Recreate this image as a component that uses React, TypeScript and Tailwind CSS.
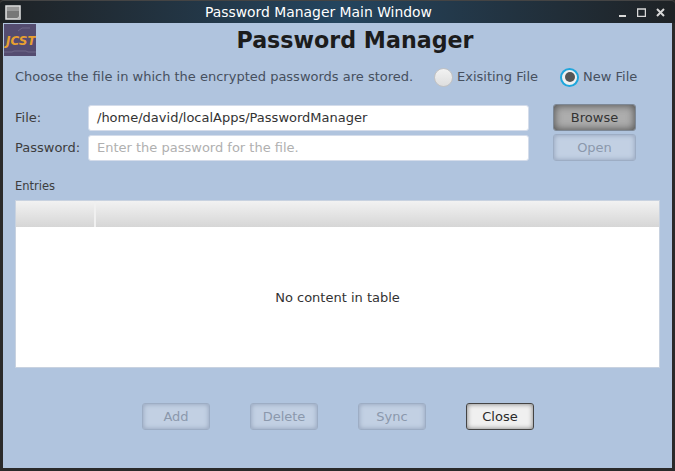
const baseButton = 'h-[27px] flex items-center justify-center rounded-[3px] text-[13px]';
const disabledButton = `${baseButton} border border-[#9dadc4] bg-[#c2d0e3] text-[#8b98ac] shadow-[inset_0_0_5px_#8f9fb8]`;

function FormRow({ label, children }: { label: string; children: React.ReactNode }) {
  return (
    <div className="flex items-center h-[27px]">
      <span className="w-[73px] text-[13px] text-[#3d3d3d]">{label}</span>
      {children}
    </div>
  );
}

function Radio({ label, checked, className }: { label: string; checked?: boolean; className: string }) {
  return (
    <div className={`flex items-center gap-[4px] ${className}`}>
      {checked ? (
        <span className="w-[19px] h-[19px] rounded-full border-2 border-[#1fa6dc] bg-[#f0f0f0] flex items-center justify-center">
          <span className="w-[10px] h-[10px] rounded-full bg-[#555]" />
        </span>
      ) : (
        <span className="w-[19px] h-[19px] rounded-full border border-[#c2c2c2] bg-gradient-to-b from-[#f2f2f2] to-[#dedede]" />
      )}
      <span className="text-[13px] text-[#46505e]">{label}</span>
    </div>
  );
}

export default function App() {
  return (
    <div className="w-[675px] h-[471px] flex flex-col bg-[#2a2a2a] overflow-hidden font-['DejaVu_Sans',sans-serif]">
      <div className="h-[23px] shrink-0 flex items-center pl-[5px] pr-[10px] rounded-t-[4px] bg-gradient-to-r from-[#1e2225] via-[#24455f] to-[#1e2225] border-t border-[#444]">
        <svg width="16" height="15" viewBox="0 0 16 15" className="shrink-0">
          <rect x="1" y="1" width="14" height="13" fill="#777" stroke="#e4e4e4" strokeWidth="1.5" />
          <rect x="2" y="2" width="12" height="4" fill="#999" />
          <circle cx="14" cy="13" r="1.5" fill="#bbb" />
        </svg>
        <span className="flex-1 text-center text-[13.9px] text-white pr-[2px]">Password Manager Main Window</span>
        <div className="flex items-center gap-[10px] shrink-0">
          <svg width="9" height="9" viewBox="0 0 9 9">
            <path d="M1 8h7" stroke="#d8d8d8" strokeWidth="2" />
          </svg>
          <svg width="9" height="9" viewBox="0 0 9 9" fill="none">
            <rect x="0.5" y="1" width="8" height="7.5" stroke="#d8d8d8" strokeWidth="1.5" />
          </svg>
          <svg width="9" height="9" viewBox="0 0 9 9">
            <path d="M1 1l7 7M8 1l-7 7" stroke="#d8d8d8" strokeWidth="2" />
          </svg>
        </div>
      </div>

      <div className="flex-1 mx-[3px] mb-[3px] bg-[#b0c4de] flex flex-col">
        <div className="flex h-[37px] items-start">
          <svg width="32" height="32" viewBox="0 0 32 32" className="ml-[1px] mt-[1px] shrink-0">
            <rect width="32" height="32" fill="#544c70" />
            <path d="M0 28h8l2-1h12l2 1h8M14 7l4-3h8" stroke="#6f6888" fill="none" />
            <text x="2" y="21" fontSize="12" fontWeight="bold" fontStyle="italic" fill="#e8a030">JCST</text>
          </svg>
          <h1 className="flex-1 text-center text-[22.2px] leading-[35px] font-bold text-[#1c1c1c] pl-[2px]">Password Manager</h1>
        </div>

        <div className="flex items-center h-[24px] mt-[5px] pl-[12px]">
          <span className="w-[419px] text-[13px] text-[#46505e]">Choose the file in which the encrypted passwords are stored.</span>
          <Radio label="Exisiting File" className="w-[126px]" />
          <Radio label="New File" checked className="" />
        </div>

        <div className="flex mt-[15px] pl-[12px]">
          <div className="flex flex-col gap-[3px]">
            <FormRow label="File:">
              <div className="w-[441px] h-[26px] flex items-center px-[8px] rounded-[3px] bg-white border border-[#d4dcea] text-[13px] text-[#333]">
                /home/david/localApps/PasswordManager
              </div>
            </FormRow>
            <FormRow label="Password:">
              <div className="w-[441px] h-[26px] flex items-center px-[8px] rounded-[3px] bg-white border border-[#d4dcea] text-[13px] text-[#b0b0b0]">
                Enter the password for the file.
              </div>
            </FormRow>
          </div>
          <div className="flex flex-col gap-[3px] ml-[24px] w-[83px]">
            <div className={`${baseButton} border border-[#7d8896] bg-[#adadad] text-[#333] shadow-[inset_0_0_8px_#444]`}>Browse</div>
            <div className={disabledButton}>Open</div>
          </div>
        </div>

        <div className="text-[11.5px] leading-[13px] text-[#3d3d3d] mt-[19px] ml-[12px]">Entries</div>

        <div className="mx-[12px] mt-[7px] h-[168px] bg-white flex flex-col border border-[#c8d2e0]">
          <div className="flex h-[26px] shrink-0 bg-gradient-to-b from-[#f2f2f2] to-[#d6d6d6]">
            <div className="w-[80px] border-r-2 border-[#f0f0f0]" />
            <div className="flex-1" />
          </div>
          <div className="flex-1 flex items-center justify-center pt-[2px] text-[13px] text-[#333]">No content in table</div>
        </div>

        <div className="flex pl-[139px] gap-[40px] mt-[35px]">
          <div className={`${disabledButton} w-[68px]`}>Add</div>
          <div className={`${disabledButton} w-[68px]`}>Delete</div>
          <div className={`${disabledButton} w-[68px]`}>Sync</div>
          <div className={`${baseButton} w-[68px] border border-[#444] bg-[#f0f0f0] text-[#2a2a2a] shadow-[inset_0_0_5px_#777]`}>Close</div>
        </div>
      </div>
    </div>
  );
}
